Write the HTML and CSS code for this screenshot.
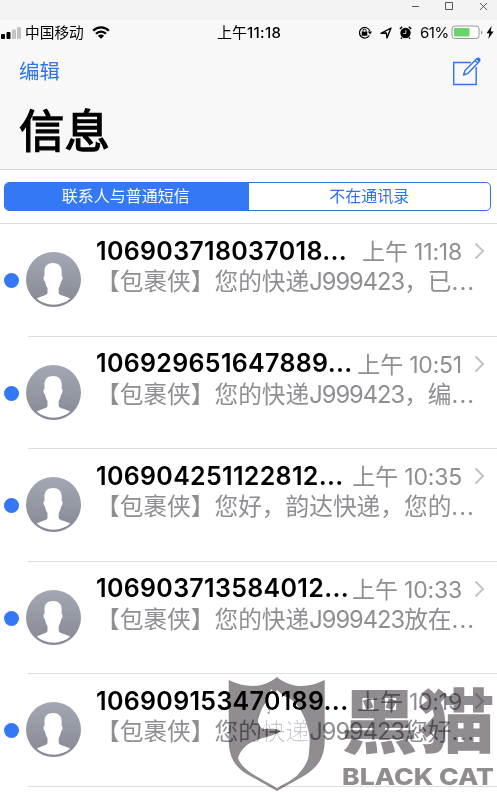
FILE: index.html
```
<!DOCTYPE html>
<html lang="zh-CN">
<head>
<meta charset="utf-8">
<title>信息</title>
<link rel="stylesheet" href="styles.css">
</head>
<body>
<svg class="defs" width="0" height="0">
  <defs>
    <linearGradient id="av" x1="0" y1="0" x2="0" y2="1"><stop offset="0" stop-color="#a4a8b4"/><stop offset="1" stop-color="#858892"/></linearGradient>
    <clipPath id="disc"><circle cx="27.5" cy="27.5" r="25.3"/></clipPath>
    <symbol id="person" viewBox="0 0 55 55">
      <circle cx="27.500" cy="27.500" r="27.500" fill="url(#av)"/>
      <path clip-path="url(#disc)" fill="#fff" d="M27 11c5.500 0 8.700 3 8.700 8.500v4.500c1.600 0 .8 5-.7 5.500-.4 3-1.300 5-2.300 6.500v5c0 2.500 8 3 12.300 6V55H10v-8c4.300-3 11.500-3.500 11.500-6v-5c-1.200-1.500-2-3.500-2.400-6.500-1.500-.5-2.300-5.500-.6-5.500v-4.500c0-5.500 3-8.500 8.500-8.500z"/>
    </symbol>
    <symbol id="chev" viewBox="0 0 11 18"><path d="M1.500 1.500 9 9l-7.500 7.500" fill="none" stroke="#c4c4c8" stroke-width="2"/></symbol>
  </defs>
</svg>
<div class="window-bar">
  <svg width="90" height="20" viewBox="0 0 90 20" fill="none" stroke="#555" stroke-width="1"><path d="M5 6.500h7M38.500 2.500h7v7h-7zM73 3l7 7M80 3l-7 7"/></svg>
</div>
<header class="header">
  <div class="status">
    <svg class="signal" width="21" height="13" viewBox="0 0 21 13"><rect x="1" y="8" width="4" height="5" rx="1"/><rect x="6.500" y="6" width="4" height="7" rx="1"/><g fill="#c2c2c2"><rect x="12" y="3.500" width="4" height="9.500" rx="1"/><rect x="17" y="1" width="4" height="12" rx="1"/></g></svg>
    <span class="carrier">中国移动</span>
    <svg class="wifi" width="18" height="13" viewBox="0 0 18 13"><g fill="none" stroke="#000" stroke-width="2.300"><path d="M1.200 4.800C5.500.3 12.500.3 16.800 4.800M4 7.800c2.800-2.900 7.200-2.900 10 0"/></g><path d="M9 12.800 5.900 9.700c1.700-1.600 4.500-1.600 6.200 0z"/></svg>
    <span class="clock">上午<b>11:18</b></span>
    <svg class="lock" width="14" height="13" viewBox="0 0 14 13"><path d="M11.300 9.500A5.300 5.300 0 1 1 11.800 5" fill="none" stroke="#000" stroke-width="1.200"/><path d="m9.800 5.500h4.200l-2 3zM3.700 5.800h5.600V9.700H3.700z"/><path d="M5 6V4.500a1.500 1.500 0 0 1 3 0V6" fill="none" stroke="#000"/></svg>
    <svg class="arrow" width="12" height="12" viewBox="0 0 12 12"><path d="M1 6.400 11 1 7 11 6.300 6z" fill="none" stroke="#000" stroke-width="1.400" stroke-linejoin="round"/></svg>
    <svg class="alarm" width="13" height="13" viewBox="0 0 13 13"><circle cx="6.500" cy="7" r="5.200"/><path d="M.8 3 3.200.8M12.200 3 9.800.8M3 11.500l-1 1.200M10 11.500l1 1.200" stroke="#000" stroke-width="1.500"/><path d="M6.800 4v3.500H4.300" fill="none" stroke="#fff" stroke-width=".8"/></svg>
    <span class="percent">61%</span>
    <svg class="battery" width="33" height="15" viewBox="0 0 33 15"><rect x="1" y="1" width="27" height="12.500" rx="3" fill="#fff" stroke="#999"/><rect x="3" y="3" width="15.500" height="8.500" rx="1" fill="#6bd36c"/><path d="M30 5.500c1.800.5 1.800 3.500 0 4z" fill="#999"/></svg>
    <svg class="bolt" width="8" height="13" viewBox="0 0 8 13"><path d="M5.600 0 .5 7.200h2.900L2.300 13 7.600 5.500H4.700z"/></svg>
  </div>
  <div class="nav">
    <span class="edit">编辑</span>
    <svg width="30" height="30" viewBox="0 0 30 30" fill="none" stroke="#2f74e8" stroke-width="1.400"><path d="M19 6.500H1.700v22h22.500V11"/><path d="m11.500 19 1.500-4.500L25 2.500l2.800 2.600L16 17.300zM23 4.500l2.800 2.600" stroke-linejoin="round"/><path d="m25.500 2.200 2.200 2.200" stroke-width="3"/></svg>
  </div>
  <h1>信息</h1>
</header>
<div class="filter"><div class="segments"><span class="segment on">联系人与普通短信</span><span class="segment">不在通讯录</span></div></div>
<main>
  <article class="row"><i class="dot"></i><svg class="avatar"><use href="#person"/></svg><div class="body"><div class="top"><span class="name">106903718037018<em>...</em></span><span class="time">上午<b>11:18</b></span><svg class="chev"><use href="#chev"/></svg></div><p>【包裹侠】您的快递<b>J999423</b>，已<em>...</em></p></div></article>
  <article class="row"><i class="dot"></i><svg class="avatar"><use href="#person"/></svg><div class="body"><div class="top"><span class="name">106929651647889<em>...</em></span><span class="time">上午<b>10:51</b></span><svg class="chev"><use href="#chev"/></svg></div><p>【包裹侠】您的快递<b>J999423</b>，编<em>...</em></p></div></article>
  <article class="row"><i class="dot"></i><svg class="avatar"><use href="#person"/></svg><div class="body"><div class="top"><span class="name">106904251122812<em>...</em></span><span class="time">上午<b>10:35</b></span><svg class="chev"><use href="#chev"/></svg></div><p>【包裹侠】您好，韵达快递，您的<em>...</em></p></div></article>
  <article class="row"><i class="dot"></i><svg class="avatar"><use href="#person"/></svg><div class="body"><div class="top"><span class="name">106903713584012<em>...</em></span><span class="time">上午<b>10:33</b></span><svg class="chev"><use href="#chev"/></svg></div><p>【包裹侠】您的快递<b>J999423</b>放在<em>...</em></p></div></article>
  <article class="row"><i class="dot"></i><svg class="avatar"><use href="#person"/></svg><div class="body"><div class="top"><span class="name">106909153470189<em>...</em></span><span class="time">上午<b>10:19</b></span><svg class="chev"><use href="#chev"/></svg></div><p>【包裹侠】您的快递<b>J999423</b>您好<em>...</em></p></div></article>
</main>
<svg class="watermark cat" width="280" height="122" viewBox="0 0 280 122">
  <path fill="#4c4c4c" d="M54 19 50 31C45 37 43 43 41 50c0 4 2 8 6 9 6 0 12-1 17 2-8 6-19 6-29 11-8 4-12 10-14 16 4 11 14 16 39 30 11-6 19-10 23-16 6-7 9-13 9-20 1-9 1-17-1-23-2-9-5-15-8-20-4-6-9-11-16-13L60 20l-2 3z"/>
</svg>
<svg class="watermark mark" width="280" height="122" viewBox="0 0 280 122">
  <g fill="#918c8f">
    <path fill-rule="evenodd" d="M11.700 10C28 18 46 19 60 7c14 12 32 11 47.700 3v60c0 19-8 28-21 36L60 121 28 103C16 95 11.700 84 11.700 70zM54 19 50 31C45 37 43 43 41 50c0 4 2 8 6 9 6 0 12-1 17 2-8 6-19 6-29 11-8 4-12 10-14 16 4 11 14 16 39 30 11-6 19-10 23-16 6-7 9-13 9-20 1-9 1-17-1-23-2-9-5-15-8-20-4-6-9-11-16-13L60 20l-2 3z"/>
    <path d="m51 39 3-3-1 5zM50 43l3-2-1 3z"/>
    <text class="mark-cn" x="124" y="78" textLength="154" lengthAdjust="spacingAndGlyphs">黑猫</text>
    <text class="mark-en" x="125" y="114.500" textLength="152" lengthAdjust="spacingAndGlyphs">BLACK CAT</text>
  </g>
</svg>
</body>
</html>
```
FILE: styles.css
```
* { box-sizing: border-box; }
body { margin: 0; width: 497px; height: 792px; overflow: hidden; position: relative; background: #fff; color: #000; font-family: Inter, "Noto Sans CJK SC", sans-serif; }
.defs { position: absolute; }
svg { display: block; flex: none; }
b, em { font-weight: inherit; font-style: normal; }
.window-bar { height: 20px; background: #f3f3f3; display: flex; justify-content: flex-end; }
.header { height: 150px; background: #f8f8f8; border-bottom: 1px solid #d7d7d7; }
.status { height: 25px; display: flex; align-items: center; font-size: 15px; line-height: 20px; white-space: nowrap; }
.carrier { margin-left: 4px; width: 60px; font-size: 14.700px; }
.wifi { margin-left: 7px; }
.clock { margin-left: 107px; width: 67px; }
.clock b { font-weight: 500; letter-spacing: .3px; }
.lock { margin-left: 74px; }
.arrow { margin-left: 8px; }
.alarm { margin-left: 7px; }
.percent { margin-left: 8px; width: 28px; letter-spacing: -.5px; }
.battery { margin-left: 3px; }
.bolt { margin-left: 2px; }
.nav { height: 51px; padding: 1px 15px 0 19px; display: flex; justify-content: space-between; align-items: center; color: #2f74e8; font-size: 20.500px; }
.edit { margin-top: -2px; }
h1 { margin: 0; padding-left: 19px; font-size: 45.500px; line-height: 71px; font-weight: 400; -webkit-text-stroke: 1.300px #000; }
.filter { height: 54px; padding: 12px 6px 0 4px; border-bottom: 1px solid #dedede; }
.segments { height: 29px; display: flex; border: 1px solid #2f74e8; border-radius: 5px; overflow: hidden; font-size: 16px; line-height: 27px; text-align: center; color: #2f74e8; }
.segment { flex: 1; }
.on { background: #3478f6; color: #fff; padding-right: 2px; }
.row { height: 112.600px; display: flex; padding-left: 4px; position: relative; }
.row::after { content: ""; position: absolute; left: 28px; right: 0; bottom: 0; height: 1px; background: #dedee0; }
.dot { width: 15px; height: 15px; margin: 49px 7px 0 0; border-radius: 50%; background: #3478f6; flex: none; }
.avatar { width: 55px; height: 55px; margin-top: 28px; }
.body { flex: 1; margin-left: 15px; padding-top: 11px; min-width: 0; }
.top { display: flex; align-items: center; height: 32px; white-space: nowrap; }
.name { font-size: 25px; font-weight: 600; letter-spacing: .32px; margin-top: -1px; }
.time { margin-left: auto; margin-top: -2px; color: #8e8e93; font-size: 23px; }
.time b { margin-left: 6px; letter-spacing: -.2px; }
.chev { width: 11px; height: 18px; margin: 0 12px 0 12px; }
.body p { margin: 0; height: 30px; line-height: 30px; font-size: 23.700px; color: #8e8e93; white-space: nowrap; }
.body p b { letter-spacing: -1px; }
.body p em { letter-spacing: 1px; }
.watermark { position: absolute; left: 217px; top: 670px; }
.cat { mix-blend-mode: color-dodge; }
.mark { mix-blend-mode: multiply; }
.mark-cn { font: 900 70px "Noto Sans CJK SC", sans-serif; }
.mark-en { font: 800 23px Inter, sans-serif; }
```
